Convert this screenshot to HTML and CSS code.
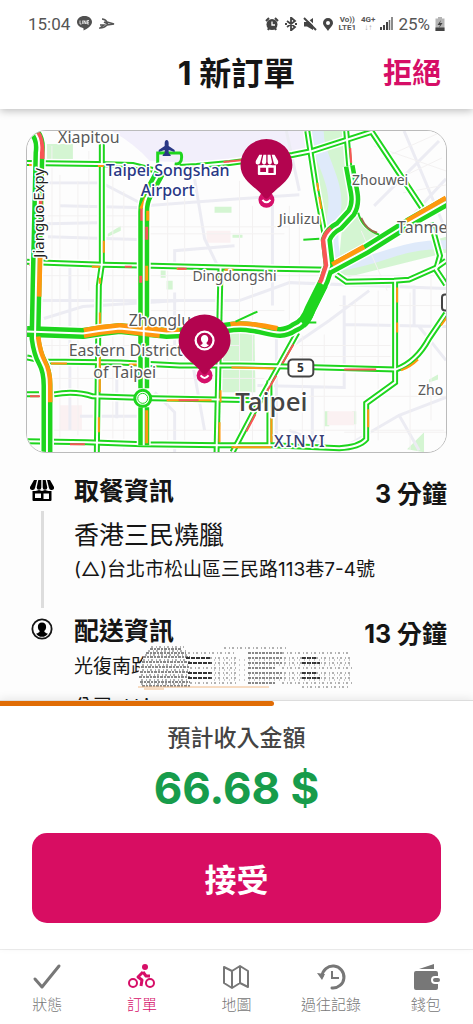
FILE: index.html
```html
<!DOCTYPE html>
<html lang="zh-Hant">
<head>
  <meta charset="utf-8">
  <meta name="viewport" content="width=device-width, initial-scale=1">
  <title>新訂單</title>
  <link rel="stylesheet" href="styles.css">
</head>
<body>
  <!-- shared icons -->
  <svg class="sprite" aria-hidden="true">
    <symbol id="shop" viewBox="0 0 24 24">
      <path d="M4 2h3L5 10a2.300 2.300 0 0 1-5-1zM8.300 2h3V9.500a2.200 2.200 0 0 1-4.600 0zM12.700 2h3l1.600 7.500a2.200 2.200 0 0 1-4.600 0zM17 2h3l4 7a2.300 2.300 0 0 1-5 1z"/>
      <path fill-rule="evenodd" d="M2.500 13h3c1.500 0 2.500-1 3.500-1s2 1 3 1 2-1 3-1 2 1 3.500 1h3v9a1 1 0 0 1-1 1h-17a1 1 0 0 1-1-1zM5 15.500v4.500h6v-4.500zM13.500 15.500v5.500H19v-5.500z"/>
    </symbol>
    <symbol id="person" viewBox="0 0 24 24">
      <circle cx="12" cy="12" r="10.500" fill="none" stroke="currentColor" stroke-width="2"/>
      <path d="M12 5c3 0 4.500 2 4.500 4.700 0 2-1 3.500-2 4.500 0 1.500 1.500 2 4 3A9 9 0 0 1 14 20.500h-4A9 9 0 0 1 5.500 17.200c2.500-1 4-1.500 4-3-1-1-2-2.500-2-4.500C7.500 7 9 5 12 5z"/>
    </symbol>
    <symbol id="person-cutout" viewBox="0 0 24 24">
      <circle cx="12" cy="12" r="11" fill="#fff"/>
      <circle cx="12" cy="12" r="8.500" fill="#b3044f"/>
      <path d="M12 6c2.500 0 4 2 4 4.500 0 2-1 3.500-2 4 0 1.500 1 2 3 2.500q-5 5-10 0c2-.5 3-1 3-2.500-1-.5-2-2-2-4C8 8 9.500 6 12 6z" fill="#fff"/>
    </symbol>
  </svg>

  <header class="header">
    <div class="status-bar">
      <span class="clock">15:04</span>
      <svg class="line-icon" width="17" height="17" viewBox="0 0 17 17">
        <path d="M8.500 1C4 1 1 3.700 1 7c0 3 2.500 5.300 6 5.900.6.200.7.700.5 2.600 4-1.800 8.500-5 8.500-8.500 0-3.300-3-6-7.500-6z" fill="#505050"/>
        <path d="M4 5.500V9h1.500M6.700 5.500V9M8 9V5.500L10 9V5.500M13 5.500h-1.700V9H13M11.300 7.200H13" fill="none" stroke="#fff" stroke-width=".8"/>
      </svg>
      <svg width="16" height="12" viewBox="0 0 16 12">
        <path d="M3 1q3 0 5 3l7 2-7 1q-3 3-7 3l4-3H1M5 4l4 2" fill="none" stroke="#555" stroke-width="1.500"/>
      </svg>
      <div class="status-icons">
        <svg width="14" height="14" viewBox="0 0 14 14">
          <circle cx="7" cy="7.500" r="5.500" fill="#444"/>
          <path d="M1 4l3-3M13 4l-3-3M3 13l1-2M11 13l-1-2" stroke="#444" stroke-width="2"/>
          <path d="M7 4.500v3.500h3" fill="none" stroke="#fff" stroke-width="1.300"/>
        </svg>
        <svg width="14" height="14" viewBox="0 0 14 14">
          <path d="M3 4l8 6-4 3.500V.5L11 4l-8 6M1 7h2M11 7h2" fill="none" stroke="#444" stroke-width="1.800"/>
        </svg>
        <svg width="14" height="14" viewBox="0 0 14 14">
          <path d="M1 5h3l6-4v12L4 9.500H1z" fill="#444"/>
          <path d="M2 0l13 12" stroke="#fff" stroke-width="1.500"/>
          <path d="M1 1l12 12" stroke="#444" stroke-width="2"/>
        </svg>
        <svg width="12" height="14" viewBox="0 0 12 14">
          <path fill-rule="evenodd" d="M6 1a5 5 0 0 1 5 5c0 3-3.500 5-5 8-1.500-3-5-5-5-8a5 5 0 0 1 5-5zm0 3a2 2 0 1 0 0 4 2 2 0 0 0 0-4z" fill="#444"/>
        </svg>
        <span class="network">Vo))<br>LTE1</span>
        <span class="network">4G+<br><span class="dim">↓↑</span></span>
        <svg width="13" height="13" viewBox="0 0 13 13">
          <path d="M1 10v3M4 8v5M7 5v8" stroke="#444" stroke-width="2"/>
          <path d="M9.500 3v10M12 0v13" stroke="#666" stroke-width="1.500"/>
        </svg>
        <span class="battery-text">25%</span>
        <svg width="10" height="14" viewBox="0 0 10 14">
          <path d="M3 0h4v1.500h2.500V14h-9V1.500H3z" fill="#b5b5b5"/>
          <path d="M.5 10.500h9V14h-9zM6 3L2.500 8H5l-1 3 3.500-5H5z" fill="#444"/>
        </svg>
      </div>
    </div>
    <div class="title-bar">
      <h1>1 新訂單</h1>
      <button type="button" class="reject">拒絕</button>
    </div>
  </header>

  <main>
    <svg class="map" viewBox="27 130 420 322" role="img" aria-label="Map of Taipei">
      <defs>
        <g id="arterials">
          <path d="M102 143V264L99 285 97 452"/>
          <path d="M27 162L97 163 133 164 153 169M180 166L197 165 230 162 293 154 313 150 372 131"/>
          <path d="M27 261L47 262 103 264 153 265 233 267 273 268 330 269"/>
          <path d="M221 267L217 452"/>
          <path d="M27 357L47 361 120 362 180 365 240 365 287 366 397 369Q417 362 430 338L447 313"/>
          <path d="M27 394H39M54 394Q75 390 93 396L153 398 263 400"/>
          <path d="M27 441L87 442 143 444 220 445 273 445 340 448Q360 447 367 439V403L396 382V280"/>
          <path d="M337 274L347 281 395 280 410 279 437 267 447 260"/>
          <path d="M308 130L317 189 325 232"/>
          <path d="M347 130L350 165"/>
          <path d="M372 130L423 207M432 222L441 255 437 269 447 284"/>
          <path d="M298 332L263 395 233 452"/>
          <path d="M270 380V445"/>
        </g>
        <g id="highways">
          <path d="M33 130Q41 137 39 152L36 285 35 338Q37 353 42 362T47 385V452"/>
          <path d="M27 331L83 333Q101 330 120 328L167 333 210 331Q235 324 252 327C270 329 281 337 295 327Q306 323 311 308L325 280 330 265 327 239Q330 230 340 225L352 212Q357 204 355 192L350 165"/>
          <path d="M330 269L367 249 410 222 447 201"/>
          <path d="M160 172L148 194Q144 201 144 211V388M144 407V445"/>
        </g>
      </defs>

      <rect x="27" y="130" width="420" height="322" fill="#fdfdfd"/>
      <path d="M112 130H313V150L200 162 150 160Q135 143 112 130z" fill="#f2effb"/>
      <g fill="#d4f5d2">
        <path d="M315 130H346L353 205 326 230 317 185 313 150z"/>
        <path d="M357 210Q360 230 380 234L340 257 343 224z"/>
        <path d="M331 270L447 236V252L350 276z"/>
        <path d="M220 325H255L256 392H220z"/>
        <path d="M47 143H73V158H47zM108 233L121 225V230L108 236zM215 206H232V212H215zM233 234H243V237H233zM161 269H166V277H161zM167 280H173V289H167zM325 411H330V426H325zM353 411H357V424H353zM408 449L425 432V452zM430 379L439 374V379L430 382z"/>
      </g>
      <path d="M318 130C317 155 340 180 335 210S334 255 338 272" fill="none" stroke="#dfeafa" stroke-width="13"/>
      <path d="M338 266Q360 263 390 253T447 244" fill="none" stroke="#dfeafa" stroke-width="9"/>
      <path d="M207 230H231V242H207zM60 405H82V430H60zM328 411H355V425H328z" fill="#fbf1f2"/>

      <g class="side-streets">
        <path d="M48 182H102L146 205 240 198 300 194M60 205L147 207M47 223L98 222M48 236L146 239M70 262V430M175 292V345M29 300H240L290 282 447 288M44 318L83 306 180 300M195 178L205 238 218 265M175 262V250L235 245M273 204V305M117 360V418M80 416H143M155 392L175 412V452M193 363L205 430M258 385L345 387V295M313 386V450M345 324L447 326M370 290L330 320 292 346M290 430L340 450 400 415 447 397M400 415L420 450M405 130L447 230M375 205L440 140M390 240L447 178M415 285V325M277 325V450M420 326L447 360M287 130L300 190"/>
      </g>
      <g class="lanes">
        <path d="M52 145V440M60 174V445M78 180V435M89 150V290M113 160V440M124 190V450M168 190V450M185 195V445M240 180V440M253 205V445M290 205V320M300 220V325M303 335V447M325 334V450M356 300V447M379 290V440M411 292V450M432 270V420M30 275H447M48 215H145M105 226H290M150 233H285M30 345H240M50 378H265M50 430H445M150 310H285M340 305H447M300 345H395M300 356H395M310 396H447M345 432H447M375 145L447 170M382 158L440 132M399 178L443 157M404 192L447 184M362 230L388 290"/>
      </g>

      <use href="#arterials" class="casing"/>
      <use href="#arterials" class="road"/>
      <use href="#arterials" class="gap"/>
      <!-- traffic goes on the right and lower lane of each arterial -->
      <g class="slow" transform="translate(2 2)">
        <path d="M27 162H34M96 163H102M187 165L206 164M102 238V250M98 275V281M90 264H98M175 266H183M223 267H232M316 180L317 188M318 194L320 206M98 310V325M98 355V390M97 415V430M49 361H65M127 362H140M165 398H210M219 388V400M218 420V440M230 365L273 366M270 405V440M230 445H270M396 285V300M367 407V425M400 368Q410 364 417 357M440 323L447 313M396 320V330"/>
      </g>
      <g class="jammed" transform="translate(2 2)">
        <path d="M222 159L242 157M27 262H32M123 264H130M176 266H185M349 145L350 160M177 398H197M68 442H83M343 367H375M292 342L281 361M275 373L265 390M254 412L245 429M28 394H38"/>
      </g>

      <use href="#highways" class="casing wide"/>
      <use href="#highways" class="road wide"/>
      <g class="slow wide">
        <path d="M40 256L39 296M38 336Q40 352 45 362T50 383V402M84 330Q102 326 120 325L167 330 180 330M84 335Q102 331 120 330L160 335M231 324Q244 321 278 328M333 264L365 246M408 220L447 197"/>
        <path class="thin" d="M141 208L146 197M148 220V210M147 265V280M147 410V443"/>
      </g>
      <g class="jammed wide">
        <path d="M37 131Q43 138 42 158M40 195V212M321 283L327 265 324 240Q326 232 332 228"/>
        <path class="thin" d="M142 208V220M147 226V239M141 275V282"/>
      </g>
      <use href="#highways" class="gap"/>
      <path d="M324 284L311 310Q307 320 303 323" fill="none" stroke="#1ed51e" stroke-width="10"/>

      <path d="M158 163V152H180Q182 152 182 156 182 164 175 163" fill="none" stroke="#1ed51e" stroke-width="3"/>
      <path d="M359 212Q363 228 380 234M236 321L258 311M309 322H317M304 239L320 238" fill="none" stroke="#1ed51e" stroke-width="2"/>
      <path d="M362 217Q367 229 378 232" fill="none" stroke="#9b6a4c" stroke-width="2"/>
      <circle cx="143" cy="398" r="8" fill="#fff" stroke="#1ed51e" stroke-width="3"/>
      <circle cx="143" cy="398" r="5" fill="#fff" stroke="#1ed51e" stroke-width="1"/>

      <g class="labels">
        <text x="89" y="142">Xiapitou</text>
        <text x="381" y="184" font-size="14">Zhouwei</text>
        <text x="300" y="223" font-size="15">Jiulizu</text>
        <text x="398" y="232" text-anchor="start">Tanme</text>
        <text x="235" y="280" font-size="14">Dingdongshi</text>
        <text x="129" y="325" text-anchor="start">Zhonglu</text>
        <text x="126" y="356">Eastern District</text>
        <text x="125" y="378">of Taipei</text>
        <text x="419" y="395" font-size="14" text-anchor="start">Zho</text>
        <text x="272" y="411" class="city">Taipei</text>
        <text x="301" y="447" class="district">XINYI</text>
        <text class="expy" transform="translate(44 212) rotate(-90)">Jianguo Expy</text>
        <text x="168" y="175" class="airport">Taipei Songshan</text>
        <text x="168" y="195" class="airport">Airport</text>
      </g>
      <path d="M167 139c1 0 2 1 2 3v3l6 4v2l-6-2v3l2 2v1h-8v-1l2-2v-3l-6 2v-2l6-4v-3c0-2 1-3 2-3z" fill="#293785"/>
      <rect x="289" y="359" width="25" height="17" rx="4" fill="#fff" stroke="#444" stroke-width="2"/>
      <text x="301" y="372" class="shield">5</text>
      <rect x="443" y="294" width="20" height="16" rx="3" fill="#fff" stroke="#444" stroke-width="2"/>

      <g id="pickup-pin">
        <circle cx="267" cy="199" r="8" fill="#d5106a"/>
        <path d="M267 138a26 26 0 0 1 26 26c0 16-16 22-23 32q-3 4-6 0c-7-10-23-16-23-32a26 26 0 0 1 26-26z" fill="#b3044f"/>
        <path d="M263 199q4 5 8 0" fill="none" stroke="#fff" stroke-width="2"/>
        <use href="#shop" x="256" y="152" width="23" height="23"/>
      </g>
      <g id="dropoff-pin">
        <circle cx="205" cy="375" r="8" fill="#d5106a"/>
        <path d="M205 314a26 26 0 0 1 26 26c0 16-16 22-23 32q-3 4-6 0c-7-10-23-16-23-32a26 26 0 0 1 26-26z" fill="#b3044f"/>
        <path d="M201 375q4 5 8 0" fill="none" stroke="#fff" stroke-width="2"/>
        <use href="#person-cutout" x="194" y="329" width="22" height="22"/>
      </g>
    </svg>

    <section class="stop pickup">
      <div class="rail">
        <svg width="24" height="24"><use href="#shop"/></svg>
        <span class="rail-line"></span>
      </div>
      <div class="stop-info">
        <div class="stop-head">
          <h2>取餐資訊</h2>
          <span class="eta">3 分鐘</span>
        </div>
        <p class="name">香港三民燒臘</p>
        <p class="address">(△)台北市松山區三民路113巷7-4號</p>
      </div>
    </section>

    <section class="stop dropoff">
      <div class="rail">
        <svg width="22" height="22"><use href="#person"/></svg>
      </div>
      <div class="stop-info">
        <div class="stop-head">
          <h2>配送資訊</h2>
          <span class="eta">13 分鐘</span>
        </div>
        <p class="address">光復南路</p>
        <p class="address">公司 d l i</p>
        <svg class="mask" width="230" height="50" viewBox="0 0 230 50" aria-hidden="true">
          <path d="M16 6H222V48H2Q4 16 16 6z" fill="#fdfdfd"/>
          <g class="mask-rows">
            <path class="solid" d="M16 6H48M12 10H52M9 14H56M8 19H56M7 24H56M6 29H56M5 34H56M6 39H56M8 43H56"/>
            <path class="broken" d="M17 4H50M14 8H54M11 12H54M9 17H54M8 22H54M8 27H54M7 32H54M7 37H54M7 41H54"/>
            <path class="solid dark" d="M52 15H76M54 20H78M54 30H78M54 35H78M168 15H182M168 20H186M168 30H182M168 35H186"/>
            <path class="broken" d="M54 10H100M76 15H104M76 20H104M56 25H104M76 30H104M76 35H104M56 40H104M90 5H154"/>
            <path class="solid" d="M114 10H148M114 15H148M114 20H148M114 25H142M114 30H148M114 35H148M114 40H142"/>
            <path class="broken" d="M148 10H214M150 15H218M150 20H218M148 25H218M150 30H218M150 35H218M148 40H218M168 44H216"/>
            <path class="faint" d="M80 17H218M80 22H218M80 32H218M80 37H218M80 27H112"/>
          </g>
          <path d="M4 44H135M10 46H30" stroke="#f0b986" stroke-width="1"/>
        </svg>
      </div>
    </section>
  </main>

  <section class="offer">
    <progress class="countdown" value="58" max="100" aria-label="剩餘時間"></progress>
    <p class="offer-label">預計收入金額</p>
    <p class="amount">66.68 $</p>
    <button type="button" class="accept">接受</button>
  </section>

  <nav class="tabs">
    <a href="#status">
      <svg width="30" height="28" viewBox="0 0 30 28"><path d="M3 16l7 8L27 3" fill="none" stroke="currentColor" stroke-width="3" stroke-linecap="round" stroke-linejoin="round"/></svg>
      狀態
    </a>
    <a href="#orders" class="active">
      <svg width="30" height="28" viewBox="0 0 30 28">
        <g fill="none" stroke="currentColor" stroke-width="2"><circle cx="6" cy="20" r="4"/><circle cx="23" cy="20" r="4"/></g>
        <path d="M16 9l-5 5 4 3-1 6M16 9l3 4h4" fill="none" stroke="currentColor" stroke-width="3" stroke-linejoin="round"/>
        <circle cx="18" cy="4" r="3" fill="currentColor"/>
      </svg>
      訂單
    </a>
    <a href="#map">
      <svg width="30" height="28" viewBox="0 0 30 28"><path d="M3 4l8 4 8-5 8 5v16l-8-4-8 5-8-5zM11 8v17M19 3v17" fill="none" stroke="currentColor" stroke-width="2" stroke-linejoin="round"/></svg>
      地圖
    </a>
    <a href="#history">
      <svg width="30" height="28" viewBox="0 0 30 28">
        <path d="M6 13A11 11 0 1 1 16 25" fill="none" stroke="currentColor" stroke-width="3" stroke-linecap="round"/>
        <path d="M1 10l8 1-3 6zM15 8h2v6h6v2h-8z" fill="currentColor"/>
      </svg>
      過往記錄
    </a>
    <a href="#wallet">
      <svg width="30" height="28" viewBox="0 0 30 28">
        <path d="M8 6l15-5v5zM5 8h20q2 0 2 2v3h-3a4 4 0 0 0 0 8h3v4q0 2-2 2H5q-2 0-2-2V10q0-2 2-2z" fill="currentColor"/>
        <rect x="22" y="15" width="7" height="4" rx="2" fill="currentColor"/>
      </svg>
      錢包
    </a>
  </nav>
</body>
</html>
```
FILE: styles.css
```css
* { box-sizing: border-box; margin: 0; padding: 0; }

body {
  font-family: Inter, "Noto Sans CJK TC", sans-serif;
  background: #fdfdfd;
  color: #151515;
  height: 100vh;
  display: flex;
  flex-direction: column;
}

button {
  font-family: inherit;
  border: none;
  cursor: pointer;
}

.sprite {
  position: absolute;
  width: 0;
  height: 0;
}

/* header */
.header {
  position: relative;
  z-index: 1;
  background: #fff;
  padding-bottom: 8px;
  box-shadow: 0 2px 8px rgba(0,0,0,0.25);
}

.status-bar {
  display: flex;
  align-items: center;
  gap: 6px;
  height: 47px;
  padding: 0 28px;
  font-family: Roboto, sans-serif;
  color: #555;
}

.clock {
  font-size: 17px;
}

.status-icons {
  display: flex;
  align-items: center;
  gap: 5px;
  margin-left: auto;
}

.network {
  font-size: 8px;
  line-height: 8px;
  font-weight: bold;
  text-align: center;
}

.dim {
  color: #aaa;
}

.battery-text {
  font-size: 17px;
}

.title-bar {
  display: grid;
  grid-template-columns: 1fr auto 1fr;
  align-items: center;
  padding: 0 32px;
  height: 54px;
}

.title-bar h1 {
  grid-column: 2;
  font-size: 32px;
  line-height: 48px;
}

.reject {
  justify-self: end;
  background: none;
  color: #d60e67;
  font-size: 29px;
  line-height: 44px;
  font-weight: bold;
}

main {
  flex: 1;
  min-height: 0;
  overflow: hidden;
  padding: 21px 26px 0;
}

/* map */
.map {
  display: block;
  width: 100%;
  border: 1px solid #bbb;
  border-radius: 20px;
  font-family: "Noto Sans", sans-serif;
}

.side-streets, .lanes, .slow, .jammed, .casing, .road, .gap { fill: none; }
.side-streets { stroke: #ececf3; stroke-width: 3; }
.lanes { stroke: #f3f1f1; stroke-width: 1; }
.casing { stroke: #fff; stroke-width: 9; }
.casing.wide { stroke-width: 14; }
.road { stroke: #1ed51e; stroke-width: 6; }
.road.wide { stroke-width: 11; }
.gap { stroke: #fff; stroke-width: 2; }
.slow { stroke: #ff980f; stroke-width: 2; }
.jammed { stroke: #f85555; stroke-width: 2; }
.slow.wide, .jammed.wide { stroke-width: 5; }
.wide .thin { stroke-width: 3; }
#pickup-pin use { fill: #fff; }

.labels { font-size: 16px; }

.labels text {
  fill: #595959;
  stroke: #fff;
  stroke-width: 3px;
  stroke-linejoin: round;
  paint-order: stroke;
  text-anchor: middle;
}

.labels text[text-anchor="start"] { text-anchor: start; }
.labels .city { font-size: 26px; font-weight: 500; fill: #444; }
.labels .district { font-size: 16px; font-weight: 500; fill: #3a3f75; letter-spacing: 2px; }
.labels .expy { font-size: 15px; fill: #222; }
.labels .airport { font-size: 16px; font-weight: 500; fill: #293785; }
.shield { font-size: 12px; font-weight: bold; text-anchor: middle; fill: #333; }

/* stops */
.stop {
  display: flex;
  margin-top: 20px;
}

.dropoff {
  margin-top: 5px;
}

.rail {
  width: 32px;
  margin-right: 16px;
  padding-top: 5px;
  display: flex;
  flex-direction: column;
  align-items: center;
}

.rail-line {
  width: 3px;
  height: 97px;
  margin-top: 9px;
  background: #ddd;
}

.stop-info {
  position: relative;
  flex: 1;
}

.stop-head {
  display: flex;
  justify-content: space-between;
  height: 40px;
}

.stop-head h2, .eta {
  font-size: 25px;
  line-height: 36px;
  font-weight: bold;
}

.eta {
  padding-top: 3px;
}

.name {
  font-size: 25px;
  line-height: 44px;
}

.address {
  font-size: 19px;
  line-height: 26px;
}

.dropoff .stop-head {
  height: 34px;
}

.dropoff .address {
  line-height: 40px;
}

.mask {
  position: absolute;
  left: 60px;
  top: 30px;
}

.mask-rows { fill: none; stroke: #666; stroke-width: 1; }
.mask-rows .solid { stroke-dasharray: 3 1 2 1; stroke-width: 2; stroke: #888; }
.mask-rows .dark { stroke: #333; stroke-dasharray: 4 1; }
.mask-rows .broken { stroke-dasharray: 2 3 1 2; }
.mask-rows .faint { stroke-dasharray: 1 4; stroke: #999; }

/* offer */
.offer {
  background: #fff;
  padding: 0 32px 26px;
  text-align: center;
  border-top: 1px solid #ddd;
  box-shadow: 0 -2px 8px rgba(0,0,0,0.08);
  z-index: 1;
}

.countdown {
  display: block;
  appearance: none;
  width: calc(100% + 64px);
  height: 5px;
  margin: 0 -32px;
  border: none;
}

.countdown::-webkit-progress-bar {
  background: transparent;
}

.countdown::-webkit-progress-value {
  background: #e06c05;
  border-radius: 0 3px 3px 0;
}

.offer-label {
  margin-top: 15px;
  font-size: 23px;
  line-height: 34px;
  font-weight: 500;
  color: #444;
}

.amount {
  font-size: 44px;
  line-height: 56px;
  margin: 5px 0 17px;
  font-weight: bold;
  color: #179c4b;
}

.accept {
  width: 100%;
  height: 90px;
  border-radius: 15px;
  background: #d80d62;
  color: #fff;
  font-size: 32px;
  font-weight: bold;
}

/* bottom tabs */
.tabs {
  display: grid;
  grid-template-columns: repeat(5, 1fr);
  height: 75px;
  padding-top: 13px;
  background: #fff;
  border-top: 1px solid #eee;
}

.tabs a {
  display: flex;
  flex-direction: column;
  align-items: center;
  font-size: 15px;
  line-height: 28px;
  font-weight: 300;
  color: #777;
  text-decoration: none;
}

.tabs .active {
  color: #d60e67;
}
```
